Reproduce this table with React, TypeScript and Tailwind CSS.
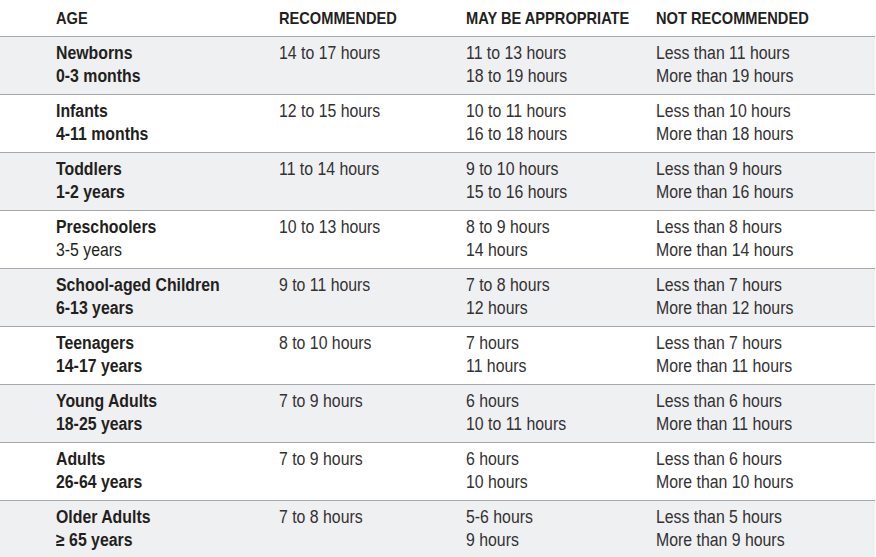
const rows = [
  { group: "Newborns", ages: "0-3 months", rec: "14 to 17 hours", may: ["11 to 13 hours", "18 to 19 hours"], not: ["Less than 11 hours", "More than 19 hours"] },
  { group: "Infants", ages: "4-11 months", rec: "12 to 15 hours", may: ["10 to 11 hours", "16 to 18 hours"], not: ["Less than 10 hours", "More than 18 hours"] },
  { group: "Toddlers", ages: "1-2 years", rec: "11 to 14 hours", may: ["9 to 10 hours", "15 to 16 hours"], not: ["Less than 9 hours", "More than 16 hours"] },
  { group: "Preschoolers", ages: "3-5 years", rec: "10 to 13 hours", may: ["8 to 9 hours", "14 hours"], not: ["Less than 8 hours", "More than 14 hours"], plainAge: true },
  { group: "School-aged Children", ages: "6-13 years", rec: "9 to 11 hours", may: ["7 to 8 hours", "12 hours"], not: ["Less than 7 hours", "More than 12 hours"] },
  { group: "Teenagers", ages: "14-17 years", rec: "8 to 10 hours", may: ["7 hours", "11 hours"], not: ["Less than 7 hours", "More than 11 hours"] },
  { group: "Young Adults", ages: "18-25 years", rec: "7 to 9 hours", may: ["6 hours", "10 to 11 hours"], not: ["Less than 6 hours", "More than 11 hours"] },
  { group: "Adults", ages: "26-64 years", rec: "7 to 9 hours", may: ["6 hours", "10 hours"], not: ["Less than 6 hours", "More than 10 hours"] },
  { group: "Older Adults", ages: "≥ 65 years", rec: "7 to 8 hours", may: ["5-6 hours", "9 hours"], not: ["Less than 5 hours", "More than 9 hours"] },
];

const cols = "grid grid-cols-[223px_187px_190px_1fr] pl-[56px]";
const cell = "origin-left scale-x-[0.88] whitespace-nowrap";

export default function App() {
  return (
    <div className="w-[875px] bg-white text-[#231f20] font-['Liberation_Sans',Arial,sans-serif]">
      <div className={`${cols} h-[36px] pt-[9px] text-[17px] leading-[20px] font-bold`}>
        <div className="origin-left scale-x-[0.86] whitespace-nowrap">AGE</div>
        <div className="origin-left scale-x-[0.86] whitespace-nowrap">RECOMMENDED</div>
        <div className="origin-left scale-x-[0.86] whitespace-nowrap">MAY BE APPROPRIATE</div>
        <div className="origin-left scale-x-[0.86] whitespace-nowrap">NOT RECOMMENDED</div>
      </div>
      {rows.map((r, i) => (
        <div
          key={r.group}
          className={`${cols} h-[58px] border-t border-[#a5a7aa] pt-[5px] text-[18px] leading-[22.5px] ${
            i % 2 === 0 ? "bg-[#eff0f1]" : "bg-white"
          }`}
        >
          <div className={cell}>
            <div className="font-bold">{r.group}</div>
            <div className={r.plainAge ? "" : "font-bold"}>{r.ages}</div>
          </div>
          <div className={`${cell} text-[#333132]`}>{r.rec}</div>
          <div className={`${cell} text-[#333132]`}>
            <div>{r.may[0]}</div>
            <div>{r.may[1]}</div>
          </div>
          <div className={`${cell} text-[#333132]`}>
            <div>{r.not[0]}</div>
            <div>{r.not[1]}</div>
          </div>
        </div>
      ))}
    </div>
  );
}
